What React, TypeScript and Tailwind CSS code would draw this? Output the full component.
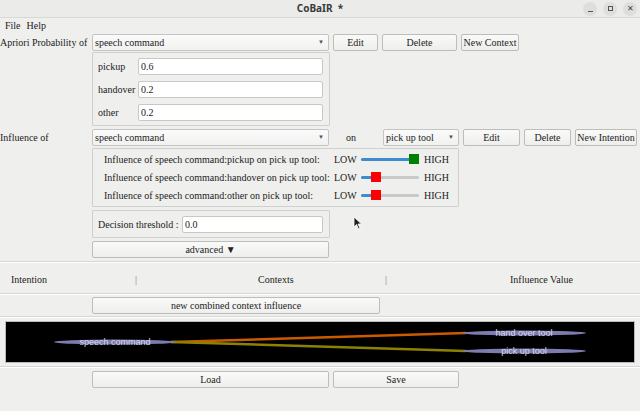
import React from "react";

const serif = { fontFamily: '"Liberation Serif", "Times New Roman", serif' };

function Btn({ w, children, className = "" }: { w: string; children: React.ReactNode; className?: string }) {
  return (
    <div
      className={`${w} h-[17px] flex items-center justify-center whitespace-nowrap rounded-[2px] border border-[#bdbdbb] bg-gradient-to-b from-[#fafaf9] to-[#eeeeec] text-[10px] text-[#222] shrink-0 ${className}`}
    >
      {children}
    </div>
  );
}

function Combo({ w, text }: { w: string; text: string }) {
  return (
    <div
      className={`${w} h-[17px] flex items-center justify-between rounded-[2px] border border-[#c4c4c2] bg-gradient-to-b from-[#fbfbfb] to-[#f1f1f0] pl-[2px] pr-[4px] text-[10px] text-[#222] shrink-0`}
    >
      <span>{text}</span>
      <span className="text-[6px] text-[#555]">▼</span>
    </div>
  );
}

function Field({ w, value }: { w: string; value: string }) {
  return (
    <div
      className={`${w} h-[17px] flex items-center rounded-[2px] border border-[#c8c8c6] bg-white pl-[2px] text-[10px] text-[#222] shrink-0`}
    >
      {value}
    </div>
  );
}

function Slider({ high }: { high: boolean }) {
  return (
    <div className="relative w-[58px] h-[10px] shrink-0">
      <div className="absolute left-0 right-0 top-[4px] h-[3px] rounded-full bg-[#c9c9c9]" />
      <div
        className={`absolute left-0 top-[4px] h-[3px] rounded-full bg-[#3c8dd0] ${high ? "w-[52px]" : "w-[12px]"}`}
      />
      <div
        className={`absolute top-0 w-[10px] h-[10px] ${high ? "left-[48px] bg-[#008000]" : "left-[10px] bg-[#ff0000]"}`}
      />
    </div>
  );
}

function Hline() {
  return <div className="h-[2px] border-t border-[#d6d6d4] border-b border-b-white" />;
}

export default function App() {
  const probs = [
    ["pickup", "0.6"],
    ["handover", "0.2"],
    ["other", "0.2"],
  ];
  const infl = [
    ["Influence of speech command:pickup on pick up tool:", true],
    ["Influence of speech command:handover on pick up tool:", false],
    ["Influence of speech command:other on pick up tool:", false],
  ] as const;

  return (
    <div className="w-[640px] h-[411px] bg-[#efefed] text-[#222] text-[10px] overflow-hidden relative" style={serif}>
      {/* title bar */}
      <div className="h-[18px] bg-[#ebebea] border-b border-[#d8d8d6] flex items-center relative">
        <div
          className="absolute left-0 right-0 text-center text-[10px] font-bold text-[#3a3a3a]"
          style={{ fontFamily: '"Noto Sans", "DejaVu Sans", sans-serif' }}
        >
          CoBaIR&nbsp;&nbsp;*
        </div>
        <div className="ml-auto flex items-center gap-[6px] pr-[3px]">
          <div className="w-[14px] h-[14px] rounded-full bg-[#dededc] flex items-end justify-center pb-[4px]">
            <div className="w-[5px] h-[1px] bg-[#555]" />
          </div>
          <div className="w-[14px] h-[14px] rounded-full bg-[#dededc] flex items-center justify-center">
            <div className="w-[5px] h-[5px] border border-[#555]" />
          </div>
          <div className="w-[14px] h-[14px] rounded-full bg-[#dededc] flex items-center justify-center text-[8px] text-[#444] leading-none">
            ✕
          </div>
        </div>
      </div>

      {/* menu */}
      <div className="h-[15px] flex items-center gap-[6px] pl-[5px]">
        <span>File</span>
        <span>Help</span>
      </div>

      {/* apriori row */}
      <div className="flex items-center h-[18px] whitespace-nowrap">
        <div className="w-[92px] shrink-0">Apriori Probability of</div>
        <Combo w="w-[237px]" text="speech command" />
        <Btn w="w-[45px]" className="ml-[4px]">Edit</Btn>
        <Btn w="w-[75px]" className="ml-[4px]">Delete</Btn>
        <Btn w="w-[58px]" className="ml-[4px]">New Context</Btn>
      </div>

      {/* probabilities group */}
      <div className="ml-[92px] mt-[1px] w-[238px] h-[74px] border border-[#cfcfcd] rounded-[1px] px-[5px] pt-[5px] flex flex-col gap-[6px]">
        {probs.map(([l, v]) => (
          <div key={l} className="flex items-center h-[17px]">
            <div className="w-[40px] shrink-0">{l}</div>
            <Field w="w-[185px]" value={v} />
          </div>
        ))}
      </div>

      {/* influence row */}
      <div className="flex items-center h-[18px] mt-[2px] whitespace-nowrap">
        <div className="w-[92px] shrink-0">Influence of</div>
        <Combo w="w-[237px]" text="speech command" />
        <div className="w-[54px] shrink-0 pl-[17px]">on</div>
        <Combo w="w-[76px]" text="pick up tool" />
        <Btn w="w-[57px]" className="ml-[4px]">Edit</Btn>
        <Btn w="w-[47px]" className="ml-[4px]">Delete</Btn>
        <Btn w="w-[62px]" className="ml-[4px]">New Intention</Btn>
      </div>

      {/* influence group */}
      <div className="ml-[92px] mt-[2px] w-[367px] h-[59px] border border-[#cfcfcd] rounded-[1px] pl-[11px] pt-[1px] flex flex-col">
        {infl.map(([l, high]) => (
          <div key={l} className="flex items-center h-[18px]">
            <div className="w-[230px] shrink-0 whitespace-nowrap">{l}</div>
            <div className="w-[27px] shrink-0">LOW</div>
            <Slider high={high} />
            <div className="ml-[5px]">HIGH</div>
          </div>
        ))}
      </div>

      {/* threshold group */}
      <div className="ml-[92px] mt-[3px] w-[238px] h-[28px] border border-[#cfcfcd] rounded-[1px] pl-[5px] flex items-center">
        <div className="w-[84px] shrink-0 whitespace-nowrap">Decision threshold :</div>
        <Field w="w-[141px]" value="0.0" />
      </div>

      <div className="ml-[92px] mt-[3px]">
        <Btn w="w-[237px]">advanced ▼</Btn>
      </div>

      <div className="mt-[3px]">
        <Hline />
      </div>

      {/* table header */}
      <div className="h-[30px] relative">
        <span className="absolute top-[9px] left-[11px]">Intention</span>
        <span className="absolute top-[9px] left-[135px] text-[#777]">|</span>
        <span className="absolute top-[9px] left-[258px]">Contexts</span>
        <span className="absolute top-[9px] left-[385px] text-[#777]">|</span>
        <span className="absolute top-[9px] left-[510px]">Influence Value</span>
      </div>

      <Hline />

      <div className="ml-[92px] mt-[2px]">
        <Btn w="w-[288px]">new combined context influence</Btn>
      </div>

      <div className="mt-[2px]">
        <Hline />
      </div>

      {/* graph */}
      <div className="mx-[5px] mt-[3px] h-[42px] bg-black border border-[#bbb]">
        <svg width="628" height="40" viewBox="0 0 628 40">
          <line x1="165" y1="20" x2="460" y2="11" stroke="#cc5a00" strokeWidth="2.5" />
          <line x1="165" y1="20" x2="460" y2="29" stroke="#8c8200" strokeWidth="2.5" />
          <ellipse cx="109" cy="20" rx="61" ry="2.5" fill="#7c7cb0" />
          <ellipse cx="518" cy="11" rx="62" ry="2.5" fill="#7c7cb0" />
          <ellipse cx="518" cy="29" rx="62" ry="2.5" fill="#7c7cb0" />
          <g fontFamily='"Liberation Sans", Arial, sans-serif' fontSize="9" fill="#d8d8e8" textAnchor="middle">
            <text x="109" y="23">speech command</text>
            <text x="518" y="14">hand over tool</text>
            <text x="518" y="32">pick up tool</text>
          </g>
        </svg>
      </div>

      <div className="mt-[3px]">
        <Hline />
      </div>

      <div className="ml-[92px] mt-[3px] flex gap-[4px]">
        <Btn w="w-[237px]">Load</Btn>
        <Btn w="w-[126px]">Save</Btn>
      </div>

      {/* mouse pointer */}
      <svg className="absolute left-[353px] top-[216px]" width="10" height="14" viewBox="0 0 10 14">
        <path d="M1 1 L1 11 L3.5 8.5 L5.5 13 L7 12.3 L5 8 L8.5 8 Z" fill="#222" stroke="#fff" strokeWidth="0.8" />
      </svg>
    </div>
  );
}
